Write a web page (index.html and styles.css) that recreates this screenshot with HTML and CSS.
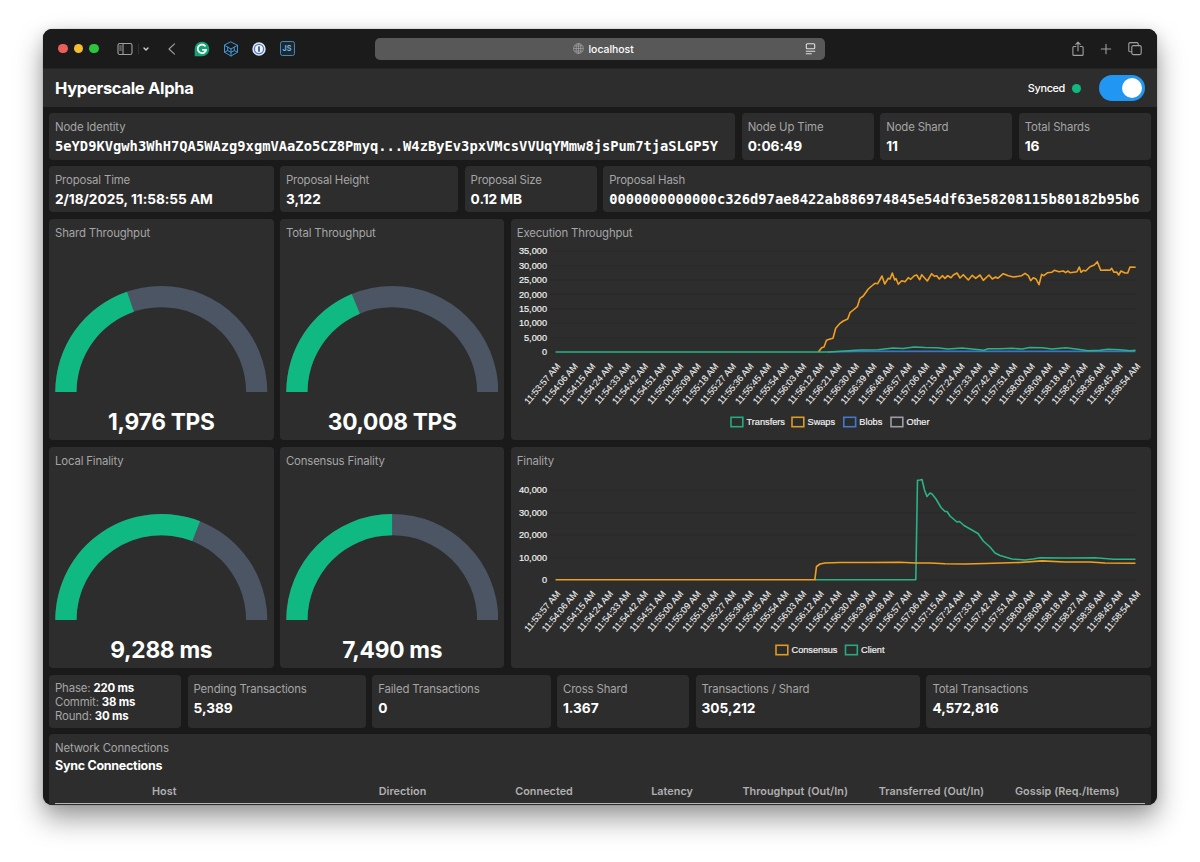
FILE: index.html
```html
<!DOCTYPE html>
<html lang="en">
  <head>
    <meta charset="UTF-8" />
    <meta name="viewport" content="width=device-width, initial-scale=1.0" />
    <title>Hyperscale Alpha</title>
    <link rel="stylesheet" href="styles.css">
  </head>
  <body>
    <div class="window">
      <div class="toolbar">
        <div class="lights">
          <span class="light red"></span>
          <span class="light yellow"></span>
          <span class="light green"></span>
        </div>
        <svg class="icon sidebar" width="34" height="16" viewBox="0 0 34 16">
          <rect x="1" y="2.5" width="14" height="11" rx="1.8" />
          <path d="M6 2.5v11M2.7 5h1.6M2.7 7h1.6M2.7 9h1.6" />
          <path class="dim" d="M21.5 3v10" />
          <path class="bright" d="M27 7l2 2L31 7" />
        </svg>
        <svg class="icon back" width="10" height="14" viewBox="0 0 10 14">
          <path d="M7.5 1.800L2 7l5.500 5.200" />
        </svg>
        <svg class="icon ext" width="16" height="16" viewBox="0 0 16 16">
          <path class="grammarly" d="M8 .7a7.300 7.300 0 1 1 0 14.600H.7V8A7.300 7.300 0 0 1 8 .7z" />
          <path class="grammarly-g" d="M11 4.800A4.300 4.300 0 1 0 12.200 8.800H8.800" />
        </svg>
        <svg class="icon ext cube" width="16" height="16" viewBox="0 0 16 16">
          <path d="M8 1l6.500 3.300v6.900L8 15l-6.500-3.800V4.300zM1.500 4.300L8 8l6.500-3.700M8 8v7M4.700 6.100V9.600L1.500 11.200M4.700 9.600L8 11.400M11.300 6.100v3.500l3.200 1.600M11.300 9.600L8 11.400" />
        </svg>
        <svg class="icon ext" width="16" height="16" viewBox="0 0 16 16">
          <circle cx="8" cy="8" r="6.700" fill="#dfe6f5" stroke="none" />
          <circle cx="8" cy="8" r="4.600" fill="#eef2fa" stroke="#4f7cc6" stroke-width="1.300" />
          <rect x="7.100" y="5.200" width="1.800" height="5.600" rx=".6" fill="#3c5a94" stroke="none" />
        </svg>
        <span class="js">JS</span>
        <div class="address">
          <svg class="globe" width="11" height="11" viewBox="0 0 11 11">
            <circle cx="5.500" cy="5.500" r="4.900" />
            <ellipse cx="5.500" cy="5.500" rx="2.300" ry="4.900" />
            <path d="M.6 5.500h9.800M5.500.6v9.800M1.400 3h8.200M1.400 8h8.200" />
          </svg>
          <span>localhost</span>
          <svg class="reader" width="11" height="12" viewBox="0 0 11 12">
            <rect x="1.300" y=".8" width="8.400" height="5" rx="1" />
            <path d="M.8 8.300h9.400M.8 10.800h6" />
          </svg>
        </div>
        <svg class="icon share" width="14" height="16" viewBox="0 0 14 16">
          <path d="M4.800 5.500H2.900A1 1 0 0 0 1.900 6.500v6.900a1 1 0 0 0 1 1h8.200a1 1 0 0 0 1-1V6.500a1 1 0 0 0-1-1H9.200M7 10V1.400M4.800 3.400L7 1.200l2.200 2.200" />
        </svg>
        <svg class="icon plus" width="12" height="12" viewBox="0 0 12 12">
          <path d="M6 1.300v9.400M1.300 6h9.400" />
        </svg>
        <svg class="icon tabs" width="16" height="16" viewBox="0 0 16 16">
          <rect x="4.800" y="4.600" width="9.400" height="9" rx="1.500" />
          <path d="M4.600 10.800H3.200a1.400 1.400 0 0 1-1.400-1.400V3A1.400 1.400 0 0 1 3.200 1.600h6.600A1.400 1.400 0 0 1 11.200 3v1.600" />
        </svg>
      </div>

      <header class="header">
        <h1>Hyperscale Alpha</h1>
        <span class="synced">Synced</span>
        <span class="dot"></span>
        <span class="switch"></span>
      </header>

      <main class="grid">
        <div class="card w15">
          <div class="label">Node Identity</div>
          <div class="value mono">5eYD9KVgwh3WhH7QA5WAzg9xgmVAaZo5CZ8Pmyq...W4zByEv3pxVMcsVVUqYMmw8jsPum7tjaSLGP5Y</div>
        </div>
        <div class="card w3"><div class="label">Node Up Time</div><div class="value">0:06:49</div></div>
        <div class="card w3"><div class="label">Node Shard</div><div class="value">11</div></div>
        <div class="card w3"><div class="label">Total Shards</div><div class="value">16</div></div>

        <div class="card w5"><div class="label">Proposal Time</div><div class="value">2/18/2025, 11:58:55 AM</div></div>
        <div class="card w4"><div class="label">Proposal Height</div><div class="value">3,122</div></div>
        <div class="card w3"><div class="label">Proposal Size</div><div class="value">0.12 MB</div></div>
        <div class="card w12">
          <div class="label">Proposal Hash</div>
          <div class="value mono">0000000000000c326d97ae8422ab886974845e54df63e58208115b80182b95b6</div>
        </div>

        <div class="card w5 gauge" data-value="1976" data-max="5000">
          <div class="label">Shard Throughput</div>
          <div class="reading">1,976 TPS</div>
        </div>
        <div class="card w5 gauge" data-value="30008" data-max="80000">
          <div class="label">Total Throughput</div>
          <div class="reading">30,008 TPS</div>
        </div>
        <div class="card w14">
          <div class="label">Execution Throughput</div>
          <svg class="chart" id="execution" width="640" height="198" viewBox="511 241 640 198">
            <polyline class="blobs" points="828,352 858,351.400 1135.500,351.400" />
            <polyline class="swaps" points="818.300,352 821.700,347.700 824,347 826.500,340.300 830,339 833,338.300 835.700,328.300 840,323.300 843.300,321 847.700,319 850,312.700 853.300,310 857.300,306.700 860,298.300 863.300,296 868.300,289 871.700,286 875,283.300 877.700,283.700 882,276 884.700,284 888.300,278.300 890,279 892.300,273 894.700,280 896,278.500 898.300,284.300 901.700,280.700 905,281.700 908.300,277.700 910.700,279.300 914.300,275.700 916.700,275 919.700,279.700 921.700,274.700 927.300,281 931.700,273.700 934.300,276.300 936.700,275.700 939.300,279 942.300,275.700 945,278.300 947.700,275.700 951,277.700 953.300,275 957,273 960,278 963.300,274.700 968.300,280 972.300,275.300 975.700,278.300 980,275 983.300,280.300 989,275 992.300,279 995.700,277 997.700,278.300 1003.300,273.700 1008.300,275.700 1013.300,277 1018.300,276.300 1021.700,275.700 1025,273.300 1028.300,275.700 1030.700,280.700 1033.300,277.700 1036,279 1039,284.700 1041.700,274.300 1043.700,275.700 1047.700,272.700 1051.700,272.300 1054.300,270.300 1059,271.700 1063.300,271 1065.700,272.700 1067.700,271 1070,272.700 1077,271.700 1079.300,267 1081,272.300 1083.300,270.300 1085.700,271 1090,266.700 1094.300,265 1097.300,261.700 1100.700,270.300 1106.700,270 1110,270.300 1111.700,268.300 1114,272.300 1116.700,272 1118.700,275 1121,271 1125,273 1127.700,273 1130,267 1135.700,267.300" />
            <polyline class="green-line" points="555.500,352 828,352 845,351 860,350 878,349.700 893,348 903,348.500 914,347 925,347.500 937,347.700 948,349 962,348 972,349 984,350.300 988,348.700 1000,348.700 1012,348.300 1022,349 1030,347.500 1042,347.700 1052,349 1066,347.700 1078,349.300 1088,350.700 1100,350.300 1108,349.300 1120,349.700 1130,350.800 1135.500,350.200" />
          </svg>
        </div>

        <div class="card w5 gauge" data-value="9288" data-max="15000">
          <div class="label">Local Finality</div>
          <div class="reading">9,288 ms</div>
        </div>
        <div class="card w5 gauge" data-value="7490" data-max="15000">
          <div class="label">Consensus Finality</div>
          <div class="reading">7,490 ms</div>
        </div>
        <div class="card w14">
          <div class="label">Finality</div>
          <svg class="chart" id="finality" width="640" height="198" viewBox="511 469 640 198">
            <polyline class="green-line" points="815,579.800 915.800,579.800 917.500,480.300 920,480 922,479.500 924.500,490 927,496.500 928.700,494.500 930,493 932,494 936,499 941,507.500 945,511.500 947,511.500 950,516 954,519.500 957,522 959.500,521.500 964,525.500 971,529.500 978,533.500 983.300,541 990,547 995,553 1000,555.500 1005,557 1012,559 1025,560 1033,559 1040,557.700 1065,558 1095,557.700 1114,559.300 1135.500,559.300" />
            <polyline class="swaps" points="555.500,579.800 814.800,579.800 816.500,566.500 820,564 825,563 840,562.500 870,562.500 900,562.300 915,563 930,563 945,563.700 965,564 985,563.500 1020,562.500 1042,560.900 1065,562 1090,562 1105,563 1135.500,563.200" />
          </svg>
        </div>

        <div class="card w3 timings">
          <div>Phase: <b>220 ms</b></div>
          <div>Commit: <b>38 ms</b></div>
          <div>Round: <b>30 ms</b></div>
        </div>
        <div class="card w4"><div class="label">Pending Transactions</div><div class="value">5,389</div></div>
        <div class="card w4"><div class="label">Failed Transactions</div><div class="value">0</div></div>
        <div class="card w3"><div class="label">Cross Shard</div><div class="value">1.367</div></div>
        <div class="card w5"><div class="label">Transactions / Shard</div><div class="value">305,212</div></div>
        <div class="card w5"><div class="label">Total Transactions</div><div class="value">4,572,816</div></div>

        <div class="card w24 network">
          <div class="label">Network Connections</div>
          <h2>Sync Connections</h2>
          <div class="thead">
            <span>Host</span>
            <span>Direction</span>
            <span>Connected</span>
            <span>Latency</span>
            <span>Throughput (Out/In)</span>
            <span>Transferred (Out/In)</span>
            <span>Gossip (Req./Items)</span>
          </div>
        </div>
      </main>
    </div>
    <script src="charts.js"></script>
  </body>
</html>
```

FILE: styles.css
```css
* {
  box-sizing: border-box;
}
body {
  margin: 0;
  height: 862px;
  padding: 29px 43px 0;
  overflow: hidden;
  background: #fff;
  color: #fff;
  font-family: Inter, "Liberation Sans", sans-serif;
}
.window {
  width: 1114px;
  height: 776px;
  overflow: hidden;
  border-radius: 9px;
  background: #1a1a1a;
  box-shadow: 0 0 1px rgba(0, 0, 0, 0.5), 0 14px 28px rgba(0, 0, 0, 0.38),
    0 2px 14px rgba(0, 0, 0, 0.1);
}

/* browser toolbar */
.toolbar {
  display: flex;
  align-items: center;
  height: 40px;
  padding: 0 14px 0 15px;
  background: #1b1b1b;
  border-bottom: 1px solid #252525;
}
.lights {
  display: flex;
  gap: 6px;
  margin-right: 18px;
}
.light {
  width: 9.5px;
  height: 9.5px;
  border-radius: 50%;
}
.red {
  background: #ec5f58;
}
.yellow {
  background: #f5bd30;
}
.green {
  background: #2ac440;
}
.icon {
  flex: none;
  fill: none;
  stroke: #a0a0a0;
  stroke-width: 1.1;
  stroke-linecap: round;
  stroke-linejoin: round;
}
.icon .dim {
  stroke: #303030;
}
.icon .bright {
  stroke: #d0d0d0;
  stroke-width: 1.4;
}
.back {
  margin: 0 17px 0 16.5px;
}
.ext {
  margin-right: 12.5px;
}
.icon .grammarly {
  fill: #16a374;
  stroke: none;
}
.icon .grammarly-g {
  stroke: #fff;
  stroke-width: 1.7;
}
.cube {
  stroke: #4596d6;
  stroke-width: 1;
}
.js {
  flex: none;
  width: 15px;
  height: 15px;
  border: 1px solid #4a87b0;
  border-radius: 2.5px;
  background: #1b2731;
  color: #6fb5e2;
  font-size: 7.2px;
  font-weight: 700;
  line-height: 14px;
  text-align: center;
}
.address {
  display: flex;
  align-items: center;
  width: 450px;
  height: 22px;
  margin-left: 80px;
  padding: 0 9px 0 198px;
  border-radius: 5px;
  background: #585858;
  font-size: 10.4px;
  font-weight: 500;
}
.address span {
  margin: 1px auto 0 5px;
}
.globe,
.reader {
  fill: none;
  stroke: #a5a5a5;
  stroke-width: 0.7;
}
.reader {
  stroke: #e0e0e0;
  stroke-width: 1.1;
}
.share {
  margin: 0 15px 0 auto;
}
.tabs {
  margin-left: 15px;
}

/* app header */
.header {
  display: flex;
  align-items: center;
  height: 38.4px;
  padding: 0 12px;
  background: #2d2d2d;
}
h1 {
  margin: 0 auto 0 0;
  font-size: 16.5px;
  font-weight: 700;
  letter-spacing: -0.3px;
}
.synced {
  font-size: 10.9px;
  font-weight: 500;
  letter-spacing: -0.35px;
}
.dot {
  width: 9px;
  height: 9px;
  margin: 0 18.5px 0 6.5px;
  border-radius: 50%;
  background: #10b981;
}
.switch {
  width: 46px;
  height: 26px;
  padding: 3px;
  border-radius: 13px;
  background: #2196f3;
}
.switch::after {
  content: "";
  display: block;
  width: 20px;
  height: 20px;
  margin-left: auto;
  border-radius: 50%;
  background: #fff;
}

/* dashboard */
.grid {
  display: grid;
  grid-template-columns: repeat(24, minmax(0, 1fr));
  grid-template-rows: 46.4px 46.4px 221.6px 221.6px 53px 80px;
  gap: 6.3px;
  padding: 6px;
}
.card {
  min-width: 0;
  padding: 6px;
  overflow: hidden;
  border-radius: 4px;
  background: #2d2d2d;
}
.w3 { grid-column: span 3; }
.w4 { grid-column: span 4; }
.w5 { grid-column: span 5; }
.w12 { grid-column: span 12; }
.w14 { grid-column: span 14; }
.w15 { grid-column: span 15; }
.w24 { grid-column: span 24; }
.label {
  height: 16px;
  color: #a5a5a5;
  font-size: 11.4px;
  letter-spacing: -0.16px;
  line-height: 16.4px;
  white-space: nowrap;
}
.value {
  margin-top: 1px;
  font-size: 13.7px;
  font-weight: 700;
  letter-spacing: -0.04px;
  line-height: 20px;
  white-space: nowrap;
}
.mono {
  font-family: "DejaVu Sans Mono", monospace;
  font-size: 13.78px;
  letter-spacing: 0;
}
.arc {
  display: block;
  margin: 45px 0 0;
}
.track {
  fill: #4b5563;
}
.fill {
  fill: #10b981;
}
.reading {
  margin-top: 15px;
  font-size: 22.7px;
  font-weight: 700;
  letter-spacing: -0.28px;
  line-height: 30px;
  text-align: center;
}
.chart {
  display: block;
  margin-left: -6px;
  font-family: "Liberation Sans", Arial, sans-serif;
  font-size: 9.2px;
  fill: #f2f2f2;
}
.chart text {
  stroke: #f2f2f2;
  stroke-width: 0.18px;
}
.chart .time {
  font-size: 9.1px;
  stroke-width: 0.08px;
}
.chart polyline {
  fill: none;
  stroke-width: 1.6;
  stroke-linejoin: round;
}
.chart .rule {
  stroke: #292929;
  stroke-width: 1;
}
.chart .green-line {
  stroke: #28b487;
}
.chart .swaps {
  stroke: #f0a020;
}
.chart .blobs {
  stroke: #3b73c8;
}
.chart .key {
  fill: #292c2b;
  stroke-width: 1.6;
}
.timings {
  color: #a5a5a5;
  font-size: 11.4px;
  letter-spacing: -0.16px;
  line-height: 14px;
}
.timings b {
  color: #fff;
}
h2 {
  margin: 1.5px 0 0;
  font-size: 12.5px;
  font-weight: 700;
  letter-spacing: -0.27px;
  line-height: 18px;
}
.thead {
  display: grid;
  grid-template-columns: 226.7px 136.5px 136px 91.2px 136.3px 136.3px auto;
  height: 22px;
  margin-top: 7px;
  padding-left: 97px;
  border-bottom: 1.5px solid #b5b5b5;
  color: #b0b0b0;
  font-size: 10.8px;
  font-weight: 600;
  letter-spacing: 0.05px;
  line-height: 19px;
  white-space: nowrap;
}
```

FILE: charts.js
```js
const NS = "http://www.w3.org/2000/svg";

function add(parent, tag, attrs, text) {
  const el = document.createElementNS(NS, tag);
  for (const k in attrs) el.setAttribute(k, attrs[k]);
  if (text) el.textContent = text;
  parent.appendChild(el);
  return el;
}

// half ring from the left end to the given share of the arc
function ring(share) {
  const R = 106;
  const r = 84.8;
  const a = Math.PI * (1 - share);
  const p = (d) => `${R + d * Math.cos(a)} ${R - d * Math.sin(a)}`;
  return `M0 ${R}A${R} ${R} 0 0 1 ${p(R)}L${p(r)}A${r} ${r} 0 0 0 ${R - r} ${R}Z`;
}

document.querySelectorAll(".gauge").forEach((card) => {
  const svg = document.createElementNS(NS, "svg");
  svg.setAttribute("class", "arc");
  svg.setAttribute("width", "100%");
  svg.setAttribute("height", 106.5);
  svg.setAttribute("viewBox", "0 0 212 106.5");
  add(svg, "path", { class: "track", d: ring(1) });
  add(svg, "path", { class: "fill", d: ring(card.dataset.value / card.dataset.max) });
  card.insertBefore(svg, card.querySelector(".reading"));
});

function axes(id, zero, step, labels, tickY) {
  const svg = document.getElementById(id);
  const first = svg.firstChild;
  labels.forEach((label, i) => {
    const y = zero - i * step;
    const line = add(svg, "line", { class: "rule", x1: 550, x2: 1135.5, y1: y, y2: y });
    svg.insertBefore(line, first);
    add(svg, "text", { x: 547, y: y + 3.2, "text-anchor": "end" }, label);
  });
  for (let i = 0; i < 34; i++) {
    const s = 57 + i * 9;
    const min = String(53 + Math.floor(s / 60)).padStart(2, "0");
    const sec = String(s % 60).padStart(2, "0");
    const x = 555.5 + i * 17.576;
    add(
      svg,
      "text",
      { class: "time", transform: `translate(${x + 3} ${tickY}) rotate(-50)`, y: 3, "text-anchor": "end" },
      `11:${min}:${sec} AM`
    );
  }
}

function legend(id, y, items) {
  const svg = document.getElementById(id);
  items.forEach(([x, color, name]) => {
    add(svg, "rect", { class: "key", x, y: y - 4.7, width: 11.8, height: 9.4, stroke: color });
    add(svg, "text", { x: x + 15.5, y: y + 3.2 }, name);
  });
}

axes("execution", 352, 14.4, ["0", "5,000", "10,000", "15,000", "20,000", "25,000", "30,000", "35,000"], 364.5);
axes("finality", 580, 22.45, ["0", "10,000", "20,000", "30,000", "40,000"], 592);
legend("execution", 422, [
  [731, "#28a880", "Transfers"],
  [792, "#e09a22", "Swaps"],
  [843.8, "#4478cc", "Blobs"],
  [891, "#a09ca6", "Other"],
]);
legend("finality", 650, [
  [776, "#e09a22", "Consensus"],
  [845.5, "#28a880", "Client"],
]);
```
